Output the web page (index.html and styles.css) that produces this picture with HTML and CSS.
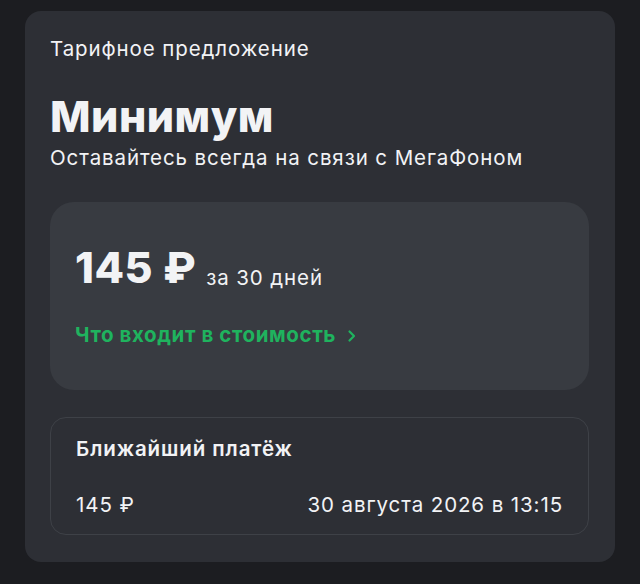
FILE: index.html
```html
<!DOCTYPE html>
<html lang="ru">
<head>
<meta charset="utf-8">
<link rel="stylesheet" href="styles.css">
</head>
<body>
<div class="card">
  <div class="label">Тарифное предложение</div>
  <h1 class="title">Минимум</h1>
  <div class="subtitle">Оставайтесь всегда на связи с МегаФоном</div>
  <div class="price-box">
    <div class="price-row">
      <span class="price">145 ₽</span>
      <span class="period">за 30 дней</span>
    </div>
    <a class="link" href="#">Что входит в стоимость
      <svg class="chev" width="10" height="14" viewBox="0 0 10 14"><path d="M2.5 2.5 L7 7 L2.5 11.5" fill="none" stroke="currentColor" stroke-width="2.2" stroke-linecap="round" stroke-linejoin="round"/></svg>
    </a>
  </div>
  <div class="pay-box">
    <div class="pay-title">Ближайший платёж</div>
    <div class="pay-row">
      <span>145 ₽</span>
      <span>30 августа 2026 в 13:15</span>
    </div>
  </div>
</div>
</body>
</html>
```
FILE: styles.css
```css
html, body {
  margin: 0;
  padding: 0;
  background: #1c1d21;
}
body {
  font-family: Inter, "Noto Sans", sans-serif;
  color: #f2f3f5;
  padding: 11px 25px 0 25px;
  width: 590px;
  height: 573px;
}
.card {
  background: #2d2f35;
  border-radius: 16px;
  padding: 26px 26px 26px 25px;
  height: 499px;
}
.label {
  font-size: 20.5px;
  line-height: 24px;
  letter-spacing: 0.9px;
}
.title {
  margin: 33px 0 0 0;
  font-size: 43px;
  line-height: 44px;
  font-weight: 800;
  letter-spacing: 0.5px;
}
.subtitle {
  font-size: 20.5px;
  line-height: 24px;
  margin-top: 8px;
  letter-spacing: 0.9px;
}
.price-box {
  margin-top: 32px;
  background: #383b41;
  border-radius: 24px;
  height: 188px;
  padding: 41px 25px 0 25px;
  box-sizing: border-box;
}
.price-row {
  display: flex;
  align-items: baseline;
  gap: 10px;
}
.price {
  font-size: 43px;
  line-height: 48px;
  font-weight: 800;
  letter-spacing: 0.5px;
}
.period {
  font-size: 20.5px;
  letter-spacing: 0.9px;
  position: relative;
  top: 2px;
}
.link {
  display: flex;
  align-items: center;
  gap: 11px;
  margin-top: 32px;
  color: #1fb35e;
  text-decoration: none;
  font-weight: 700;
  font-size: 20.5px;
  line-height: 24px;
  letter-spacing: 0.6px;
}
.chev {
  margin-top: 1px;
}
.pay-box {
  margin-top: 27px;
  border: 1px solid #3e4147;
  border-radius: 16px;
  height: 118px;
  box-sizing: border-box;
  padding: 19px 25px 0 25px;
}
.pay-title {
  font-size: 20.5px;
  font-weight: 600;
  line-height: 24px;
  letter-spacing: 0.9px;
}
.pay-row {
  display: flex;
  justify-content: space-between;
  margin-top: 32px;
  font-size: 20.5px;
  line-height: 24px;
  letter-spacing: 0.9px;
}
```
